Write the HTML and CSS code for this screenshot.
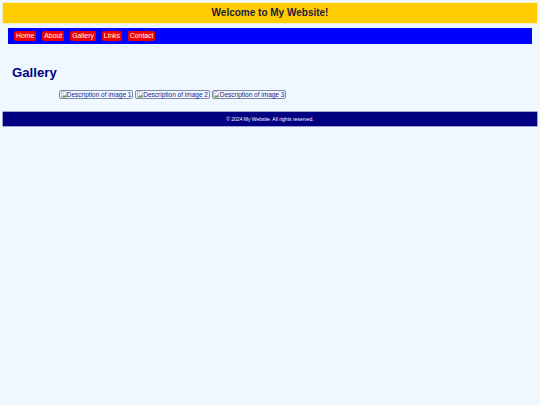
FILE: index.html
```html
<!DOCTYPE html>
<html lang="en">
<head>
<meta charset="utf-8">
<title>My Website</title>
<link rel="stylesheet" href="styles.css">
</head>
<body>
<header class="site-header">
  <h1 class="site-title">Welcome to My Website!</h1>
</header>
<nav class="site-nav">
  <a class="nav-link" href="#">Home</a>
  <a class="nav-link" href="#">About</a>
  <a class="nav-link" href="#">Gallery</a>
  <a class="nav-link" href="#">Links</a>
  <a class="nav-link" href="#">Contact</a>
</nav>
<main class="content">
  <h2 class="section-title">Gallery</h2>
  <div class="gallery">
    <span class="broken-img"><svg class="bi-icon" viewBox="0 0 6 7" width="6" height="7"><path d="M0.5 0.5h3.5l1.5 1.5v4.5h-5z" fill="#fff" stroke="#999" stroke-width="0.6"/><path d="M1 6l1.5-2 1 1 1-1.5 1 2.5z" fill="#4a4"/><circle cx="2" cy="2.3" r="0.6" fill="#39f"/></svg>Description of image 1</span>
    <span class="broken-img"><svg class="bi-icon" viewBox="0 0 6 7" width="6" height="7"><path d="M0.5 0.5h3.5l1.5 1.5v4.5h-5z" fill="#fff" stroke="#999" stroke-width="0.6"/><path d="M1 6l1.5-2 1 1 1-1.5 1 2.5z" fill="#4a4"/><circle cx="2" cy="2.3" r="0.6" fill="#39f"/></svg>Description of image 2</span>
    <span class="broken-img"><svg class="bi-icon" viewBox="0 0 6 7" width="6" height="7"><path d="M0.5 0.5h3.5l1.5 1.5v4.5h-5z" fill="#fff" stroke="#999" stroke-width="0.6"/><path d="M1 6l1.5-2 1 1 1-1.5 1 2.5z" fill="#4a4"/><circle cx="2" cy="2.3" r="0.6" fill="#39f"/></svg>Description of image 3</span>
  </div>
</main>
<footer class="site-footer">
  <p class="footer-text">&copy; 2024 My Website. All rights reserved.</p>
</footer>
</body>
</html>
```
FILE: styles.css
```css
html, body {
  margin: 0;
  padding: 0;
}
body {
  background: #f0f8ff;
  padding: 3px;
  font-family: "Liberation Sans", Arial, sans-serif;
}
.site-header {
  background: #ffcc00;
  height: 20px;
  display: flex;
  align-items: center;
  justify-content: center;
  box-shadow: 0 0 0 0.5px #ffe27a;
}
.site-title {
  margin: 0;
  font-size: 10px;
  font-weight: bold;
  color: #1c1c3c;
  line-height: 1;
}
.site-nav {
  margin: 5px 5px 0;
  background: #0000ff;
  height: 16px;
  box-sizing: border-box;
  padding: 3px 6px;
  display: flex;
  gap: 6px;
  align-items: center;
}
.nav-link {
  background: #ee0000;
  color: #fff;
  font-size: 6.85px;
  line-height: 10px;
  height: 10px;
  padding: 0 2px;
  border-radius: 2px;
  text-decoration: none;
}
.content {
  padding: 21px 9px 0;
}
.section-title {
  margin: 0;
  font-size: 13.2px;
  line-height: 16px;
  font-weight: bold;
  color: #000080;
}
.gallery {
  margin: 9px 0 0 47px;
  display: flex;
  gap: 2px;
}
.broken-img {
  display: inline-flex;
  align-items: center;
  height: 9px;
  box-sizing: border-box;
  border: 1px solid #8088b0;
  border-radius: 2px;
  padding: 0 1px 0 0.5px;
  font-size: 6.5px;
  line-height: 7px;
  color: #1a1a90;
  white-space: nowrap;
}
.bi-icon {
  margin-right: 0.3px;
  flex: none;
}
.site-footer {
  margin-top: 13px;
  background: #000080;
  height: 14px;
  display: flex;
  align-items: center;
  justify-content: center;
  box-shadow: 0 0 0 0.5px #5050a8;
}
.footer-text {
  margin: 0;
  color: #fff;
  font-size: 5px;
  line-height: 1;
}
```
